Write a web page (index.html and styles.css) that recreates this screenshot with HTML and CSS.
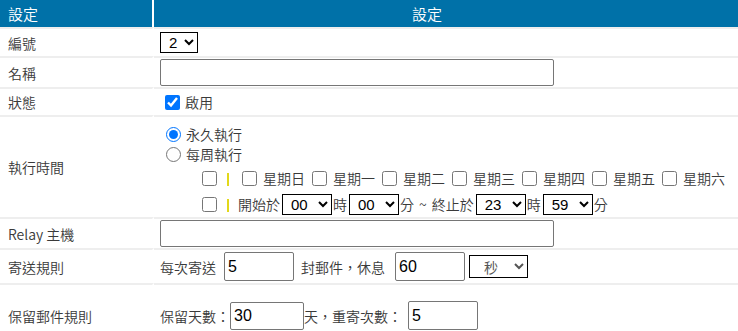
FILE: index.html
```html
<!DOCTYPE html>
<html lang="zh-Hant">
<head>
    <meta charset="UTF-8">
    <meta name="viewport" content="width=device-width, initial-scale=1.0">
    <title>設定</title>
    <link rel="stylesheet" href="styles.css">
</head>
<body>
    <table class="settings">
        <thead>
            <tr>
                <th class="key">設定</th>
                <th class="head-value">設定</th>
            </tr>
        </thead>
        <tbody>
            <tr class="row-id">
                <td class="key">編號</td>
                <td><select class="sel sel-id"><option>2</option></select></td>
            </tr>
            <tr class="row-name">
                <td class="key">名稱</td>
                <td><input type="text" class="txt txt-wide"></td>
            </tr>
            <tr class="row-status">
                <td class="key">狀態</td>
                <td>
                    <label class="check-line"><input type="checkbox" class="cb cb-enable" checked>啟用</label>
                </td>
            </tr>
            <tr class="row-schedule">
                <td class="key">執行時間</td>
                <td class="schedule">
                    <label class="opt-line"><input type="radio" name="mode" class="rb" checked>永久執行</label>
                    <label class="opt-line"><input type="radio" name="mode" class="rb">每周執行</label>
                    <div class="day-line">
                        <input type="checkbox" class="cb">
                        <span class="bar"></span>
                        <label class="day"><input type="checkbox" class="cb">星期日</label>
                        <label class="day"><input type="checkbox" class="cb">星期一</label>
                        <label class="day"><input type="checkbox" class="cb">星期二</label>
                        <label class="day"><input type="checkbox" class="cb">星期三</label>
                        <label class="day"><input type="checkbox" class="cb">星期四</label>
                        <label class="day"><input type="checkbox" class="cb">星期五</label>
                        <label class="day"><input type="checkbox" class="cb">星期六</label>
                    </div>
                    <div class="day-line">
                        <input type="checkbox" class="cb">
                        <span class="bar bar-time"></span>
                        <span>開始於</span>
                        <select class="sel sel-time"><option>00</option></select>
                        <span>時</span>
                        <select class="sel sel-time"><option>00</option></select>
                        <span>分</span>
                        <span class="tilde">~</span>
                        <span>終止於</span>
                        <select class="sel sel-time"><option>23</option></select>
                        <span>時</span>
                        <select class="sel sel-time"><option>59</option></select>
                        <span>分</span>
                    </div>
                </td>
            </tr>
            <tr class="row-relay">
                <td class="key">Relay 主機</td>
                <td><input type="text" class="txt txt-wide"></td>
            </tr>
            <tr class="row-send">
                <td class="key">寄送規則</td>
                <td>
                    <div class="inline-line">
                        <span>每次寄送</span>
                        <input type="text" class="txt txt-num gap-send" value="5">
                        <span class="gap-mail">封郵件，休息</span>
                        <input type="text" class="txt txt-num gap-rest" value="60">
                        <select class="sel sel-unit"><option>秒</option></select>
                    </div>
                </td>
            </tr>
            <tr class="row-keep">
                <td class="key">保留郵件規則</td>
                <td>
                    <div class="inline-line">
                        <span>保留天數：</span>
                        <input type="text" class="txt txt-days" value="30">
                        <span>天，重寄次數：</span>
                        <input type="text" class="txt txt-num gap-retry" value="5">
                    </div>
                </td>
            </tr>
        </tbody>
    </table>
</body>
</html>
```

FILE: styles.css
```css
* {
    box-sizing: border-box;
}

body {
    margin: 0;
    font-family: "Noto Sans CJK TC", "Noto Sans", sans-serif;
    font-size: 14px;
    font-weight: 350;
    color: #3a3a3a;
    background: #fff;
}

.settings {
    width: 100%;
    border-collapse: separate;
    border-spacing: 0;
}

.settings th {
    background: #0071a8;
    color: #fff;
    font-weight: 350;
    font-size: 15px;
    height: 27px;
    line-height: 27px;
    padding: 0 8px;
    text-align: left;
}

.settings .head-value {
    padding-left: 258px;
}

.settings .key {
    width: 155px;
    border-right: 2px solid #fff;
}

.settings td {
    border-top: 2px solid #eeeeee;
    padding: 0 6px;
    vertical-align: middle;
    line-height: 20px;
}

.settings td.key {
    padding-left: 8px;
}

.row-id { height: 29px; }
.row-name { height: 31px; }
.row-status { height: 28px; }
.row-schedule { height: 102px; }
.row-relay { height: 31px; }
.row-send { height: 35px; }
.row-keep { height: 63px; }

.settings td.schedule {
    vertical-align: top;
    padding-top: 7px;
    padding-bottom: 1px;
}

/* form controls */
.txt {
    height: 27px;
    border: 1px solid #767676;
    border-radius: 2px;
    padding: 0 3px;
    font-family: "Liberation Sans", Arial, sans-serif;
    font-size: 16px;
    color: #000;
    background: #fff;
}

.txt-wide {
    display: block;
    width: 394px;
}

.txt-num {
    width: 70px;
    height: 29px;
}

.txt-days {
    width: 74px;
    height: 28px;
}

.sel {
    height: 21px;
    border: 1px solid #000;
    border-radius: 0;
    background: #fff;
    color: #000;
    font-family: "Liberation Sans", Arial, sans-serif;
    font-size: 15px;
    padding: 0 0 0 4px;
}

.sel-id { width: 38px; }
.sel-time { width: 50px; }

.sel-unit {
    width: 59px;
    height: 23px;
    margin-left: 4px;
    font-family: "Noto Sans CJK TC", sans-serif;
    font-size: 14px;
    color: #555;
    padding-left: 10px;
}

.cb,
.rb {
    width: 15px;
    height: 15px;
    margin: 0;
    flex: none;
}

.check-line,
.opt-line {
    display: flex;
    align-items: center;
}

.cb-enable {
    margin: 0 5px 0 5px;
}

.opt-line {
    height: 20px;
}

.opt-line .rb {
    margin: 0 5px 0 6px;
}

.day-line {
    display: flex;
    align-items: center;
    height: 24px;
    margin-top: 2px;
    padding-left: 42px;
    white-space: nowrap;
}

.bar {
    width: 2px;
    height: 13px;
    margin: 2px 13px 0 10px;
    background: #e2d81a;
    flex: none;
}

.bar-time {
    margin-right: 9px;
}

.day {
    display: flex;
    align-items: center;
    margin-right: 7px;
}

.day .cb {
    margin-right: 6px;
}

.day-line .sel-time {
    margin: 0 1px 0 2px;
}

.tilde {
    margin: 0 5px;
}

.inline-line {
    display: flex;
    align-items: center;
    white-space: nowrap;
}

.gap-send { margin-left: 8px; }
.gap-mail { margin-left: 7px; }
.gap-rest { margin-left: 10px; }
.gap-retry { margin-left: 6px; }
```
